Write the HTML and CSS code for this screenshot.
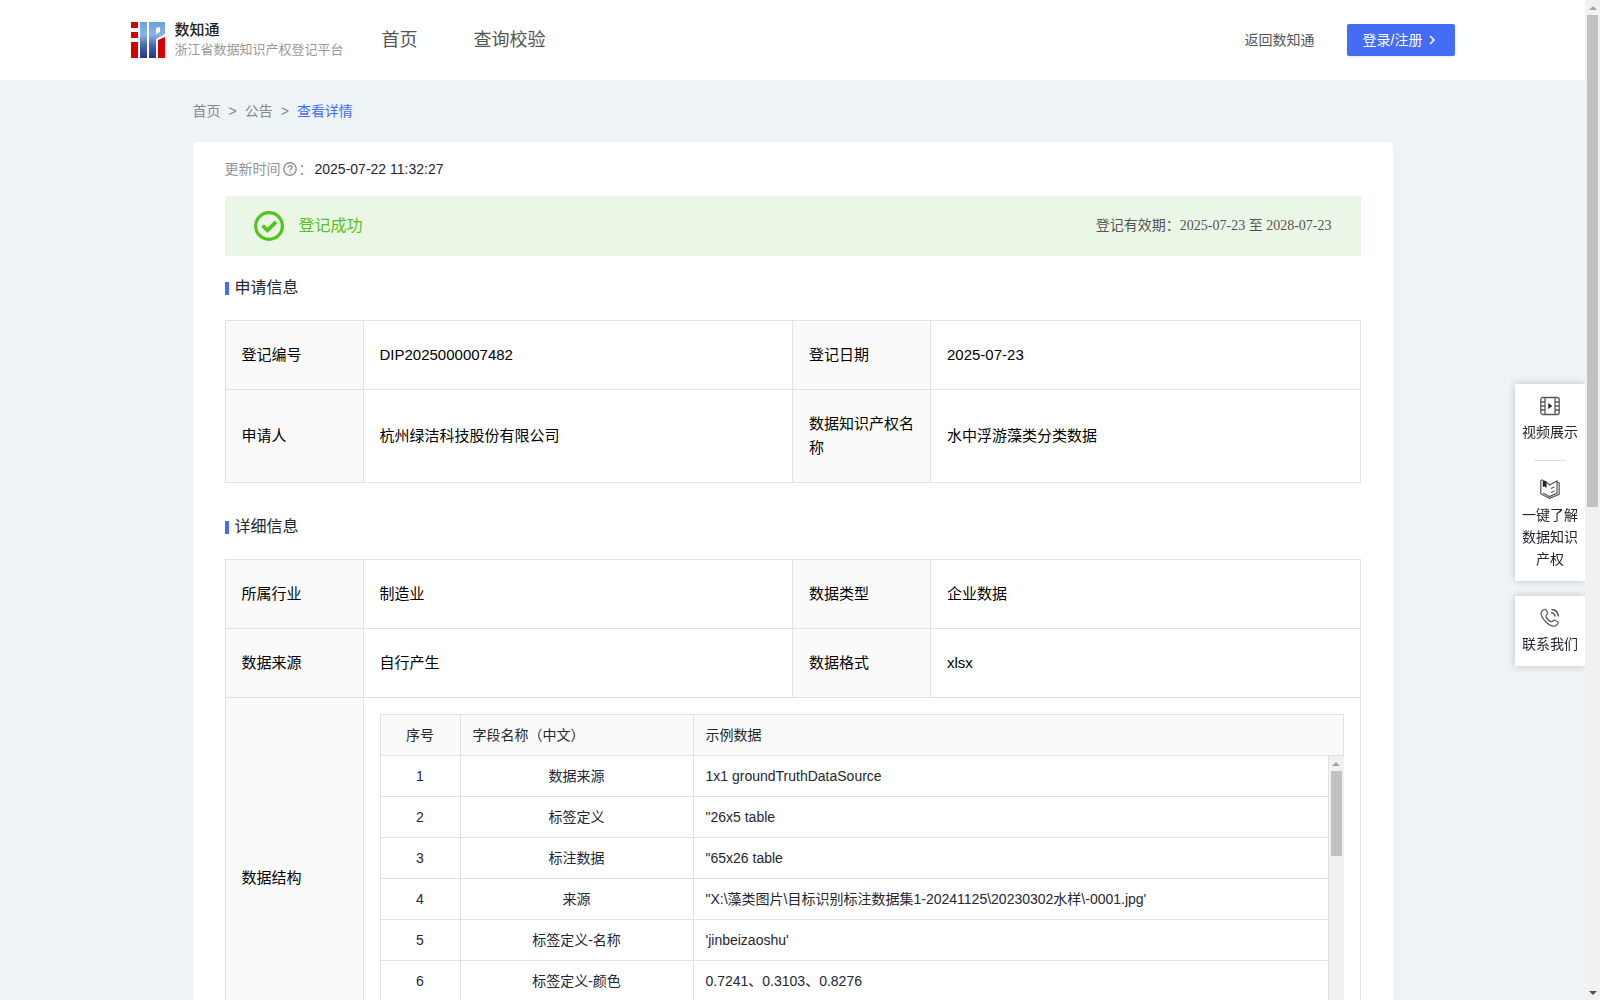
FILE: index.html
```html
<!DOCTYPE html>
<html lang="zh-CN">
<head>
  <meta charset="UTF-8">
  <meta name="viewport" content="width=device-width, initial-scale=1.0">
  <title>浙江省数据知识产权登记平台</title>
  <link rel="stylesheet" href="styles.css">
</head>
<body>
  <header class="header">
    <div class="header-inner">
      <a class="logo" href="#">
        <svg class="logo-icon" width="34" height="36" viewBox="0 0 34 36">
          <defs>
            <linearGradient id="blue" gradientUnits="userSpaceOnUse" x1="0" y1="0" x2="0" y2="36">
              <stop offset="0" stop-color="#6a9fdb"/>
              <stop offset="0.35" stop-color="#8ab6e6"/>
              <stop offset="0.65" stop-color="#4468b2"/>
              <stop offset="1" stop-color="#233585"/>
            </linearGradient>
          </defs>
          <path fill="#d60000" d="M0 0h7v6H0zM0 10h7v6H0zM0 20h7v16H0zM27 18l7-3v21h-7z"/>
          <path fill="url(#blue)" fill-rule="evenodd" d="M9 0h7v36H9zM18 0h16v12l-9 5v19h-7zM25 6v6l4-2V5z"/>
        </svg>
        <span class="logo-text">
          <strong>数知通</strong>
          <span>浙江省数据知识产权登记平台</span>
        </span>
      </a>
      <nav class="nav">
        <a href="#">首页</a>
        <a href="#">查询校验</a>
      </nav>
      <div class="header-right">
        <a class="back" href="#">返回数知通</a>
        <button class="login" type="button">登录/注册
          <svg width="12" height="12" viewBox="0 0 12 12" fill="none" stroke="#fff" stroke-width="1.5"><path d="M4 2l4 4-4 4"/></svg>
        </button>
      </div>
    </div>
  </header>

  <main class="main">
    <nav class="breadcrumb">
      <a href="#">首页</a><span>&gt;</span><a href="#">公告</a><span>&gt;</span><a class="current" href="#">查看详情</a>
    </nav>

    <div class="card">
      <div class="update">
        <span class="update-label">更新时间<svg width="14" height="14" viewBox="0 0 14 14" fill="none" stroke="#909399" stroke-width="1.4"><circle cx="7" cy="7" r="6.2"/><path d="M5 5.6c0-2.6 4-2.4 4-.1C9 7 7 6.900 7 8.400M7 9.600v1.200"/></svg>：</span>
        <span>2025-07-22 11:32:27</span>
      </div>

      <div class="banner">
        <svg width="30" height="30" viewBox="0 0 30 30" fill="none" stroke="#52c41a"><circle cx="15" cy="15" r="13.4" stroke-width="3.200"/><path d="M8.500 14.500l5 4.800 8.500-8.500" stroke-width="3.800"/></svg>
        <span class="banner-status">登记成功</span>
        <span class="banner-date">登记有效期：2025-07-23 至 2028-07-23</span>
      </div>

      <h2 class="title">申请信息</h2>
      <table class="info">
        <colgroup><col class="col-label"><col><col class="col-label"><col></colgroup>
        <tr>
          <th scope="row">登记编号</th>
          <td>DIP2025000007482</td>
          <th scope="row">登记日期</th>
          <td>2025-07-23</td>
        </tr>
        <tr>
          <th scope="row">申请人</th>
          <td>杭州绿洁科技股份有限公司</td>
          <th scope="row">数据知识产权名称</th>
          <td>水中浮游藻类分类数据</td>
        </tr>
      </table>

      <h2 class="title">详细信息</h2>
      <table class="info">
        <colgroup><col class="col-label"><col><col class="col-label"><col></colgroup>
        <tr>
          <th scope="row">所属行业</th>
          <td>制造业</td>
          <th scope="row">数据类型</th>
          <td>企业数据</td>
        </tr>
        <tr>
          <th scope="row">数据来源</th>
          <td>自行产生</td>
          <th scope="row">数据格式</th>
          <td>xlsx</td>
        </tr>
        <tr>
          <th scope="row">数据结构</th>
          <td class="struct" colspan="3">
            <table class="fields">
              <colgroup><col class="col-no"><col class="col-name"><col></colgroup>
              <thead>
                <tr><th>序号</th><th>字段名称（中文）</th><th>示例数据</th></tr>
              </thead>
            </table>
            <div class="fields-body">
              <table class="fields">
                <colgroup><col class="col-no"><col class="col-name"><col></colgroup>
                <tbody>
                  <tr><td>1</td><td>数据来源</td><td>1x1 groundTruthDataSource</td></tr>
                  <tr><td>2</td><td>标签定义</td><td>"26x5 table</td></tr>
                  <tr><td>3</td><td>标注数据</td><td>"65x26 table</td></tr>
                  <tr><td>4</td><td>来源</td><td>"X:\藻类图片\目标识别标注数据集1-20241125\20230302水样\-0001.jpg'</td></tr>
                  <tr><td>5</td><td>标签定义-名称</td><td>'jinbeizaoshu'</td></tr>
                  <tr><td>6</td><td>标签定义-颜色</td><td>0.7241、0.3103、0.8276</td></tr>
                </tbody>
              </table>
              <div class="scrollbar">
                <span class="arrow-up"></span>
                <span class="thumb thumb-fields"></span>
                <span class="arrow-down"></span>
              </div>
            </div>
          </td>
        </tr>
      </table>
    </div>
  </main>

  <aside class="side">
    <div class="side-box">
      <a class="side-item" href="#">
        <svg width="20" height="20" viewBox="0 0 20 20" fill="none" stroke="#555760" stroke-width="1.300"><rect x=".8" y="1.500" width="18.400" height="17" rx="2"/><path d="M5 1.500v17M15 1.500v17M1 6h4M1 10h4M1 14h4M15 6h4M15 10h4M15 14h4"/><path d="M8.300 7v6l4-3z" fill="#22232b" stroke="none"/></svg>
        <span>视频展示</span>
      </a>
      <hr class="side-line">
      <a class="side-item" href="#">
        <svg width="20" height="20" viewBox="0 0 20 20" fill="none" stroke="#555760" stroke-width="1.200"><path d="M.8 1.500v13.500l8.700 4.300 9.700-4V3.500M.8 1.500L3 .8M6 3l3.500 3 7.500-4v12l-7.500 3.500L3 14M11 9.500l3.500-1.500M11 13.500l3.500-1.500M17 3.500h2.200"/><path d="M2.800 1l3.700 1.500v6.500L4.700 7.500 2.800 8z" fill="#22232b" stroke="none"/></svg>
        <span>一键了解数据知识产权</span>
      </a>
    </div>
    <div class="side-box">
      <a class="side-item" href="#">
        <svg width="20" height="20" viewBox="0 0 20 20" fill="none" stroke="#555760" stroke-width="1.200"><path d="M2.500 2.500C5 .3 6 1 7.500 4.500 8.200 6.500 5.500 6.800 6 8.500c.7 2 3 4.500 5 5.200 1.800.5 2-2 4-1.500 3.500 1.500 4 2.700 1.500 5-2 2-6.500 1-10.500-3.200C1.500 9.500 0 5 2.500 2.500z"/><path d="M11 4.500c2.200.3 3.700 2 4 4M11.500 1.500c4 .2 6.600 3 7 7" stroke-width="1.600"/></svg>
        <span>联系我们</span>
      </a>
    </div>
  </aside>

  <div class="scrollbar page-scrollbar">
    <span class="arrow-up"></span>
    <span class="thumb thumb-page"></span>
    <span class="arrow-down"></span>
  </div>
</body>
</html>
```
FILE: styles.css
```css
* {
  box-sizing: border-box;
}

body {
  margin: 0;
  padding-right: 15px;
  background-color: #eef3f6;
  color: #252631;
  font-family: "Liberation Sans", "Noto Sans CJK SC", sans-serif;
  font-size: 14px;
  line-height: 22px;
}

a {
  color: inherit;
  text-decoration: none;
}

svg {
  flex: none;
}

.header {
  background: #fff;
}

.header-inner {
  display: flex;
  align-items: center;
  max-width: 1324px;
  height: 80px;
  margin: 0 auto;
}

.logo {
  display: flex;
  align-items: center;
  gap: 10px;
}

.logo-text {
  display: flex;
  flex-direction: column;
  font-size: 13px;
  line-height: 20px;
  color: #999;
}

.logo-text strong {
  font-size: 15px;
  font-weight: 500;
  color: #222;
}

.nav {
  display: flex;
  gap: 56px;
  margin-left: 38px;
  font-size: 18px;
  color: #555;
}

.header-right {
  display: flex;
  align-items: center;
  gap: 32px;
  margin-left: auto;
  color: #555;
}

.login {
  display: flex;
  align-items: center;
  gap: 4px;
  width: 108px;
  height: 32px;
  padding: 0 16px;
  border: none;
  border-radius: 2px;
  background: #446df6;
  box-shadow: 0 2px 0 rgba(0, 0, 0, 0.05);
  color: #fff;
  font: inherit;
  white-space: nowrap;
  cursor: pointer;
}

.main {
  max-width: 1200px;
  margin: 0 auto;
  padding-bottom: 40px;
}

.breadcrumb {
  display: flex;
  gap: 8px;
  padding: 20px 0;
  color: #888;
}

.breadcrumb .current {
  color: #446df6;
}

.card {
  padding: 16px 32px 32px;
  border-radius: 4px;
  background: #fff;
}

.update {
  display: flex;
  gap: 2px;
}

.update-label {
  display: flex;
  align-items: center;
  gap: 2px;
  color: #909399;
}

.banner {
  display: flex;
  align-items: center;
  height: 60px;
  margin-top: 16px;
  padding: 0 29px;
  background: #ebf7e6;
}

.banner-status {
  margin-left: 15px;
  font-size: 16px;
  color: #52c41a;
}

.banner-date {
  margin-left: auto;
  font-family: "Liberation Serif", "Noto Sans CJK SC", serif;
  color: #555;
}

.title {
  display: flex;
  align-items: center;
  gap: 6px;
  margin: 20px 0;
  font-size: 16px;
  font-weight: 400;
  line-height: 24px;
}

.title::before {
  content: "";
  width: 4px;
  height: 13px;
  background: #446df6;
}

table {
  width: 100%;
  border-collapse: collapse;
  table-layout: fixed;
}

.info {
  color: #000;
  font-size: 15px;
  line-height: 24px;
}

.info + .title {
  margin-top: 32px;
}

.info th,
.info td {
  padding: 22px 16px;
  border: 1px solid #e1e1e1;
  font-weight: 400;
  text-align: left;
}

.info th {
  background: #fafafa;
}

.col-label {
  width: 138px;
}

.info .struct {
  padding: 16px;
}

.fields {
  color: #252631;
  font-size: 14px;
  line-height: 20px;
}

.info .fields th,
.info .fields td {
  padding: 10px 12px;
}

.info .fields th:first-child,
.info .fields td:first-child,
.info .fields td:nth-child(2) {
  text-align: center;
}

.info .fields-body tr:first-child td {
  border-top: none;
}

.col-no {
  width: 80px;
}

.col-name {
  width: 233px;
}

.fields-body {
  display: flex;
  align-items: flex-start;
  height: 286px;
  overflow: hidden;
}

/* scrollbars */
.scrollbar {
  display: flex;
  flex: none;
  flex-direction: column;
  align-items: center;
  width: 15px;
  height: 100%;
  padding: 6px 0 5px;
  background: #f1f1f1;
}

.page-scrollbar {
  position: fixed;
  top: 0;
  right: 0;
}

.arrow-up,
.arrow-down {
  border: 4px solid transparent;
}

.arrow-up {
  border-top: none;
  border-bottom-color: #a3a3a3;
}

.arrow-down {
  margin-top: auto;
  border-bottom: none;
  border-top-color: #505050;
}

.thumb {
  width: 11px;
  margin-top: 5px;
  background: #c1c1c1;
}

.thumb-fields {
  height: 85px;
}

.thumb-page {
  height: 492px;
}

.side {
  position: fixed;
  top: 384px;
  right: 15px;
  display: flex;
  flex-direction: column;
  gap: 15px;
  width: 70px;
}

.side-box {
  padding: 12px 6px 11px;
  background: #fff;
  box-shadow: 0 0 8px rgba(0, 0, 0, 0.2);
}

.side-item {
  display: flex;
  flex-direction: column;
  align-items: center;
  gap: 5px;
  text-align: center;
}

.side-line {
  width: 32px;
  margin: 17px auto 18px;
  border: none;
  border-top: 1px solid #ddd;
}
```
